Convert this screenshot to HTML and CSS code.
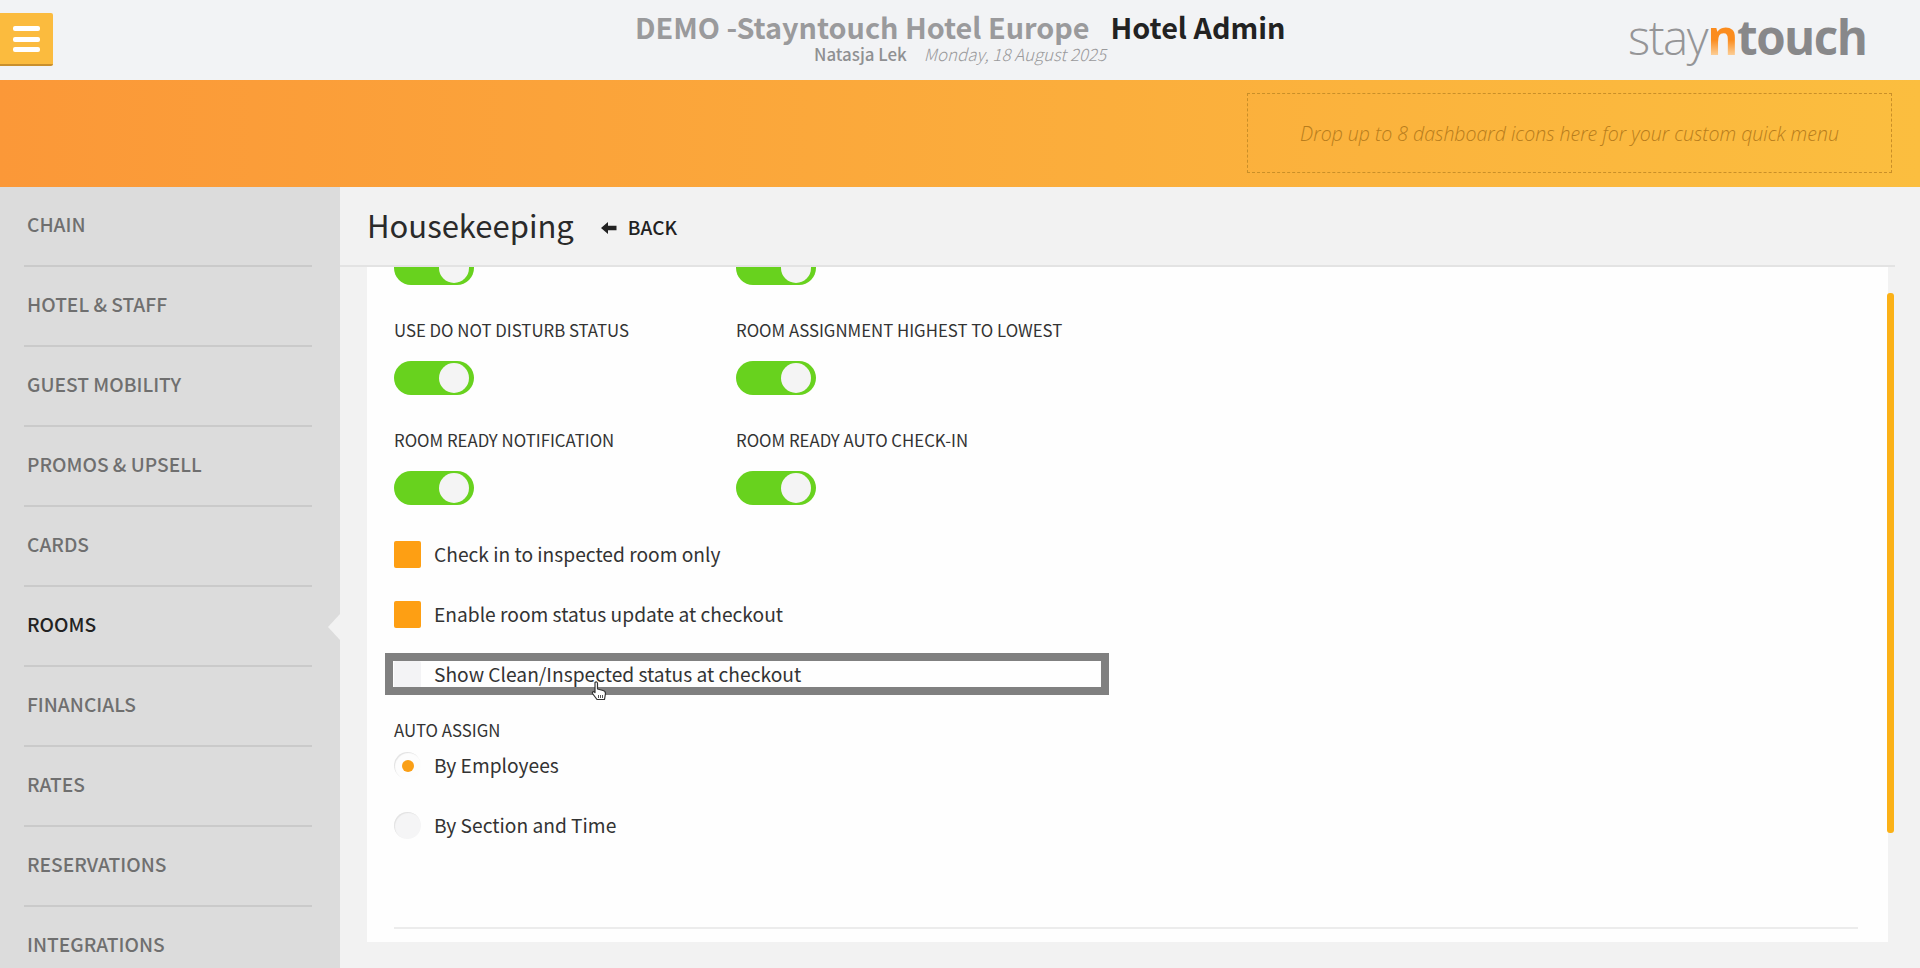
FILE: index.html
```html
<!DOCTYPE html>
<html lang="en">
<head>
<meta charset="utf-8">
<title>Housekeeping</title>
<link rel="stylesheet" href="styles.css">
</head>
<body>
<header class="topbar">
  <button class="menu-btn" aria-label="Menu"><span></span><span></span><span></span></button>
  <div class="title-block">
    <div class="title"><span class="hotel">DEMO -Stayntouch Hotel Europe</span><span class="role">Hotel Admin</span></div>
    <div class="sub"><span class="user">Natasja Lek</span><span class="date">Monday, 18 August 2025</span></div>
  </div>
  <div class="logo"><span class="l-stay">stay</span><span class="l-n">n</span><span class="l-touch">touch</span></div>
</header>
<section class="band">
  <div class="dropzone">Drop up to 8 dashboard icons here for your custom quick menu</div>
</section>
<div class="body">
  <nav class="sidebar">
    <a class="nav-item">CHAIN</a>
    <a class="nav-item">HOTEL &amp; STAFF</a>
    <a class="nav-item">GUEST MOBILITY</a>
    <a class="nav-item">PROMOS &amp; UPSELL</a>
    <a class="nav-item">CARDS</a>
    <a class="nav-item active">ROOMS</a>
    <a class="nav-item">FINANCIALS</a>
    <a class="nav-item">RATES</a>
    <a class="nav-item">RESERVATIONS</a>
    <a class="nav-item">INTEGRATIONS</a>
  </nav>
  <main class="main">
    <div class="page-head">
      <h1>Housekeeping</h1>
      <a class="back">
        <svg class="back-arrow" viewBox="0 0 16 12" width="16" height="12"><path d="M7 0 L0 6 L7 12 V8.2 H15.5 V3.8 H7 Z" fill="#222"/></svg>
        BACK
      </a>
    </div>
    <div class="card">
      <div class="scrollbar"></div>
      <div class="row cut">
        <div class="field"><span class="toggle"></span></div>
        <div class="field"><span class="toggle"></span></div>
      </div>
      <div class="row">
        <div class="field"><div class="label">USE DO NOT DISTURB STATUS</div><span class="toggle"></span></div>
        <div class="field"><div class="label">ROOM ASSIGNMENT HIGHEST TO LOWEST</div><span class="toggle"></span></div>
      </div>
      <div class="row">
        <div class="field"><div class="label">ROOM READY NOTIFICATION</div><span class="toggle"></span></div>
        <div class="field"><div class="label">ROOM READY AUTO CHECK-IN</div><span class="toggle"></span></div>
      </div>
      <div class="checks">
        <div class="check"><span class="box on"></span>Check in to inspected room only</div>
        <div class="check"><span class="box on"></span>Enable room status update at checkout</div>
        <div class="check"><span class="box"></span>Show Clean/Inspected status at checkout
          <div class="highlight"></div>
          <svg class="cursor" viewBox="0 0 16 20" width="16" height="20"><path d="M4 1.5 C5 .5 6.5 1 6.5 2.5 V8 L12 9.5 C14 10 14.5 11 14.5 12.5 L13.5 18.5 H6 L1.5 12.5 C1 11.5 2 10 3.5 11 L4 11.5 Z" fill="#fff" stroke="#333" stroke-width="1.2" stroke-linejoin="round"/><path d="M7.5 14v3M9.5 14v3M11.5 14v3" stroke="#555" stroke-width="1"/></svg>
        </div>
      </div>
      <div class="label auto">AUTO ASSIGN</div>
      <div class="radios">
        <div class="check"><span class="radio on"></span>By Employees</div>
        <div class="check"><span class="radio"></span>By Section and Time</div>
      </div>
      <div class="divider"></div>
    </div>
  </main>
</div>
</body>
</html>
```
FILE: styles.css
```css
* { box-sizing: border-box; }
html, body { margin: 0; height: 968px; overflow: hidden; }
body {
  font-family: "Noto Sans CJK SC", "Noto Sans", sans-serif;
  background: #f2f2f2;
  color: #333;
  display: flex;
  flex-direction: column;
}

.topbar {
  height: 80px;
  background: #f2f3f5;
  position: relative;
  display: flex;
  align-items: flex-start;
  flex: none;
}
.menu-btn {
  margin-top: 13px;
  width: 53px;
  height: 53px;
  padding: 13px 13px 12px;
  border: 0;
  border-bottom: 2px solid #c98f2c;
  border-radius: 0 2px 2px 0;
  background: #fbbb3e;
  display: flex;
  flex-direction: column;
  justify-content: space-between;
}
.menu-btn span { display: block; height: 5px; width: 27px; background: #fff; border-radius: 2px; }
.title-block {
  position: absolute;
  left: 635px;
  top: 9px;
  width: 650px;
}
.title { font-size: 28.8px; font-weight: 700; line-height: 36px; white-space: nowrap; display: flex; gap: 21px; }
.hotel { color: #9a9a9c; }
.role { color: #222; }
.sub { font-size: 16.9px; line-height: 20px; margin: -1px 0 0 179px; white-space: nowrap; display: flex; gap: 17px; }
.user { color: #8f9092; font-weight: 500; }
.date { color: #9a9a9c; font-style: italic; font-weight: 300; }
.logo {
  position: absolute;
  left: 1628px;
  top: 1px;
  font-family: "Open Sans", sans-serif;
  font-size: 47.5px;
  line-height: 72px;
  letter-spacing: -1.45px;
  white-space: nowrap;
}
.l-stay { color: #959597; font-weight: 300; }
.l-n {
  font-weight: 700;
  background: linear-gradient(#fb8c1e 55%, #fce0b8 85%);
  -webkit-background-clip: text;
  background-clip: text;
  color: transparent;
}
.l-touch { color: #88888a; font-weight: 700; }

.band {
  height: 107px;
  flex: none;
  background: linear-gradient(90deg, #fb9838, #fbbe3f);
  padding: 13px 28px 13px 1247px;
}
.dropzone {
  height: 80px;
  border: 1px dashed #c98f28;
  display: flex;
  align-items: center;
  justify-content: center;
  font-family: "Open Sans", sans-serif;
  font-size: 19.5px;
  font-style: italic;
  font-weight: 300;
  color: #b87d1c;
}

.body { flex: 1; display: flex; min-height: 0; }
.sidebar {
  width: 340px;
  flex: none;
  background: #dcdcdc;
  padding-top: 0;
  overflow: hidden;
  position: relative;
}
.nav-item {
  display: flex;
  align-items: center;
  height: 80px;
  margin: 0 28px 0 24px;
  padding: 0 0 5px 3px;
  border-bottom: 2px solid #cacaca;
  font-size: 19.2px;
  font-weight: 500;
  color: #6f6f6f;
  position: relative;
}
.nav-item.active { color: #222; }
.nav-item.active::after {
  content: "";
  position: absolute;
  right: -28px;
  top: 27px;
  border: 13px solid transparent;
  border-right: 12px solid #f2f2f2;
  border-left: 0;
}

.main { flex: 1; display: flex; flex-direction: column; min-width: 0; }
.page-head {
  height: 80px;
  flex: none;
  display: flex;
  align-items: center;
  padding: 0 0 3px 27px;
  background: #f2f2f2;
  border-bottom: 2px solid #e3e3e3;
  margin-right: 25px;
}
h1 { margin: 0; font-size: 31px; font-weight: 400; color: #2a2a2a; line-height: 40px; }
.back { display: flex; align-items: center; gap: 11px; margin-left: 27px; padding-top: 3px; font-size: 19px; font-weight: 500; color: #222; }
.back-arrow { margin-top: 3px; }
.card {
  position: relative;
  margin: 0 32px 26px 27px;
  flex: 1;
  background: #fefefe;
  padding-left: 27px;
  min-height: 0;
}
.scrollbar {
  position: absolute;
  left: 1520px;
  top: 26px;
  width: 7px;
  height: 540px;
  border-radius: 3px;
  background: #fbb117;
}
.row { display: flex; height: 110px; }
.row.cut { height: 18px; align-items: flex-end; overflow: hidden; margin-bottom: 1px; }
.field { width: 342px; }
.row.cut .field { height: 34px; align-self: flex-end; }
.label { font-size: 16.8px; line-height: 24px; color: #333; white-space: nowrap; }
.row .label { padding-top: 32px; height: 75px; }
.toggle {
  display: block;
  width: 80px;
  height: 34px;
  border-radius: 17px;
  background: #68d21e;
  position: relative;
}
.toggle::after {
  content: "";
  position: absolute;
  right: 5px;
  top: 2px;
  width: 30px;
  height: 30px;
  border-radius: 50%;
  background: #f4f4f4;
}
.checks { margin-top: 35px; }
.check {
  position: relative;
  height: 60px;
  display: flex;
  align-items: flex-start;
  gap: 13px;
  font-size: 19.2px;
  line-height: 26px;
  color: #333;
  white-space: nowrap;
}
.box { width: 27px; height: 27px; background: #f3f3f5; flex: none; border-radius: 2px; }
.box.on { background: #fe9f13; }
.highlight {
  position: absolute;
  left: -9px;
  top: -8px;
  width: 724px;
  height: 42px;
  border: 8px solid #808080;
  pointer-events: none;
}
.cursor { position: absolute; left: 197px; top: 20px; }
.label.auto { margin-top: -3px; height: 30px; }
.radios { margin-top: 4px; height: 175px; }
.radio {
  width: 27px;
  height: 27px;
  flex: none;
  border-radius: 50%;
  background: #f5f5f6;
  box-shadow: inset 1px 1px 1px #e2e2e2;
  position: relative;
}
.radio.on { background: #fdfdfd; }
.radio.on::after {
  content: "";
  position: absolute;
  left: 8px;
  top: 8px;
  width: 12px;
  height: 12px;
  border-radius: 50%;
  background: #fa9f16;
}
.divider { height: 2px; background: #ececec; margin: 0 31px 0 0; width: 1464px; }
```
